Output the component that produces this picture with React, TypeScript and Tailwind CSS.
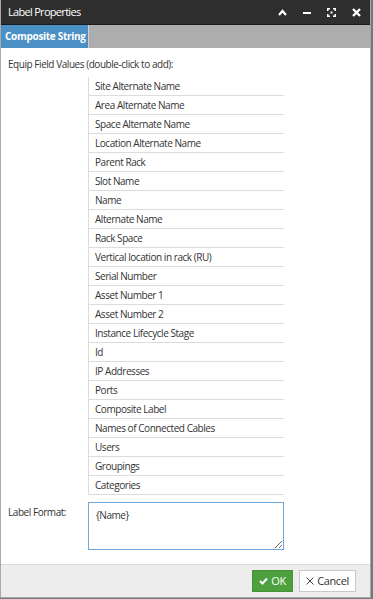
const fields = [
  'Site Alternate Name',
  'Area Alternate Name',
  'Space Alternate Name',
  'Location Alternate Name',
  'Parent Rack',
  'Slot Name',
  'Name',
  'Alternate Name',
  'Rack Space',
  'Vertical location in rack (RU)',
  'Serial Number',
  'Asset Number 1',
  'Asset Number 2',
  'Instance Lifecycle Stage',
  'Id',
  'IP Addresses',
  'Ports',
  'Composite Label',
  'Names of Connected Cables',
  'Users',
  'Groupings',
  'Categories',
]

const App = () => {
  return (
    <div
      className="w-[373px] h-[599px] bg-[#6b7a82] overflow-hidden"
      style={{ fontFamily: '"Open Sans", "Liberation Sans", sans-serif' }}
    >
      <div className="w-[371px] h-[598px] flex flex-col bg-white border-l border-r border-b border-[#a9a9a9]">
        {/* title bar */}
        <div className="h-[25px] bg-[#2e2e2e] border-b border-[#1a1a1a] flex items-center justify-between pl-[7px] pr-[9px]">
          <span className="text-white text-[11px] tracking-[-0.7px]">Label Properties</span>
          <div className="flex items-center gap-[16px] text-white">
            <svg width="9" height="7" viewBox="0 0 9 7">
              <path d="M1 6 L4.5 2 L8 6" stroke="white" strokeWidth="2.2" fill="none" />
            </svg>
            <svg width="8" height="8" viewBox="0 0 8 8">
              <rect x="0" y="4" width="8" height="2" fill="white" />
            </svg>
            <svg width="9" height="9" viewBox="0 0 9 9">
              <path d="M0 0h3v1.5H1.5V3H0zM9 0H6v1.5h1.5V3H9zM0 9h3V7.5H1.5V6H0zM9 9H6V7.5h1.5V6H9z" fill="white" />
              <rect x="3.5" y="3.5" width="2" height="2" fill="white" />
            </svg>
            <svg width="9" height="9" viewBox="0 0 9 9">
              <path d="M1 1 L8 8 M8 1 L1 8" stroke="white" strokeWidth="2.4" />
            </svg>
          </div>
        </div>

        {/* tab bar */}
        <div className="h-[23px] bg-[#adadad] flex">
          <div className="w-[88px] bg-[#4a90c4] text-white font-bold text-[10px] tracking-[-0.3px] whitespace-nowrap pl-[4px] flex items-center border-r border-[#d0d0d0]">
            Composite String
          </div>
        </div>

        {/* content */}
        <div className="flex-1 flex flex-col text-[10px] tracking-[-0.45px] text-[#333]">
          <div className="pl-[7px] pt-[9px] h-[29px]">Equip Field Values (double-click to add):</div>
          <div className="ml-[87px] w-[196px] border-l border-[#dcdcdc]">
            {fields.map((f) => (
              <div key={f} className="h-[19px] border-b border-[#dcdcdc] pl-[6px] pt-[1px] flex items-center">
                {f}
              </div>
            ))}
          </div>
          <div className="flex mt-[7px]">
            <div className="w-[87px] pl-[7px] pt-[3px]">Label Format:</div>
            <textarea
              defaultValue="{Name}"
              className="w-[196px] h-[48px] border border-[#6ea8dc] px-[7px] py-[5px] text-[10px] tracking-[-0.45px] text-[#333] outline-none resize-y"
            />
          </div>
        </div>

        {/* footer */}
        <div className="h-[33px] bg-[#ededed] border-t border-[#dcdcdc] flex items-center justify-end gap-[6px] pr-[14px]">
          <button className="h-[22px] w-[41px] bg-[#4ea03e] border border-[#45913a] text-white text-[11px] tracking-[-0.4px] flex items-center justify-center gap-[3px]">
            <svg width="9" height="8" viewBox="0 0 9 8">
              <path d="M1 4 L3.5 6.5 L8 1.5" stroke="white" strokeWidth="2" fill="none" />
            </svg>
            OK
          </button>
          <button className="h-[22px] w-[57px] bg-white border border-[#c8c8c8] text-[#333] text-[11px] tracking-[-0.4px] flex items-center justify-center gap-[3px]">
            <svg width="8" height="8" viewBox="0 0 8 8">
              <path d="M0.5 0.5 L7.5 7.5 M7.5 0.5 L0.5 7.5" stroke="#444" strokeWidth="1" />
            </svg>
            Cancel
          </button>
        </div>
      </div>
    </div>
  )
}

export default App
